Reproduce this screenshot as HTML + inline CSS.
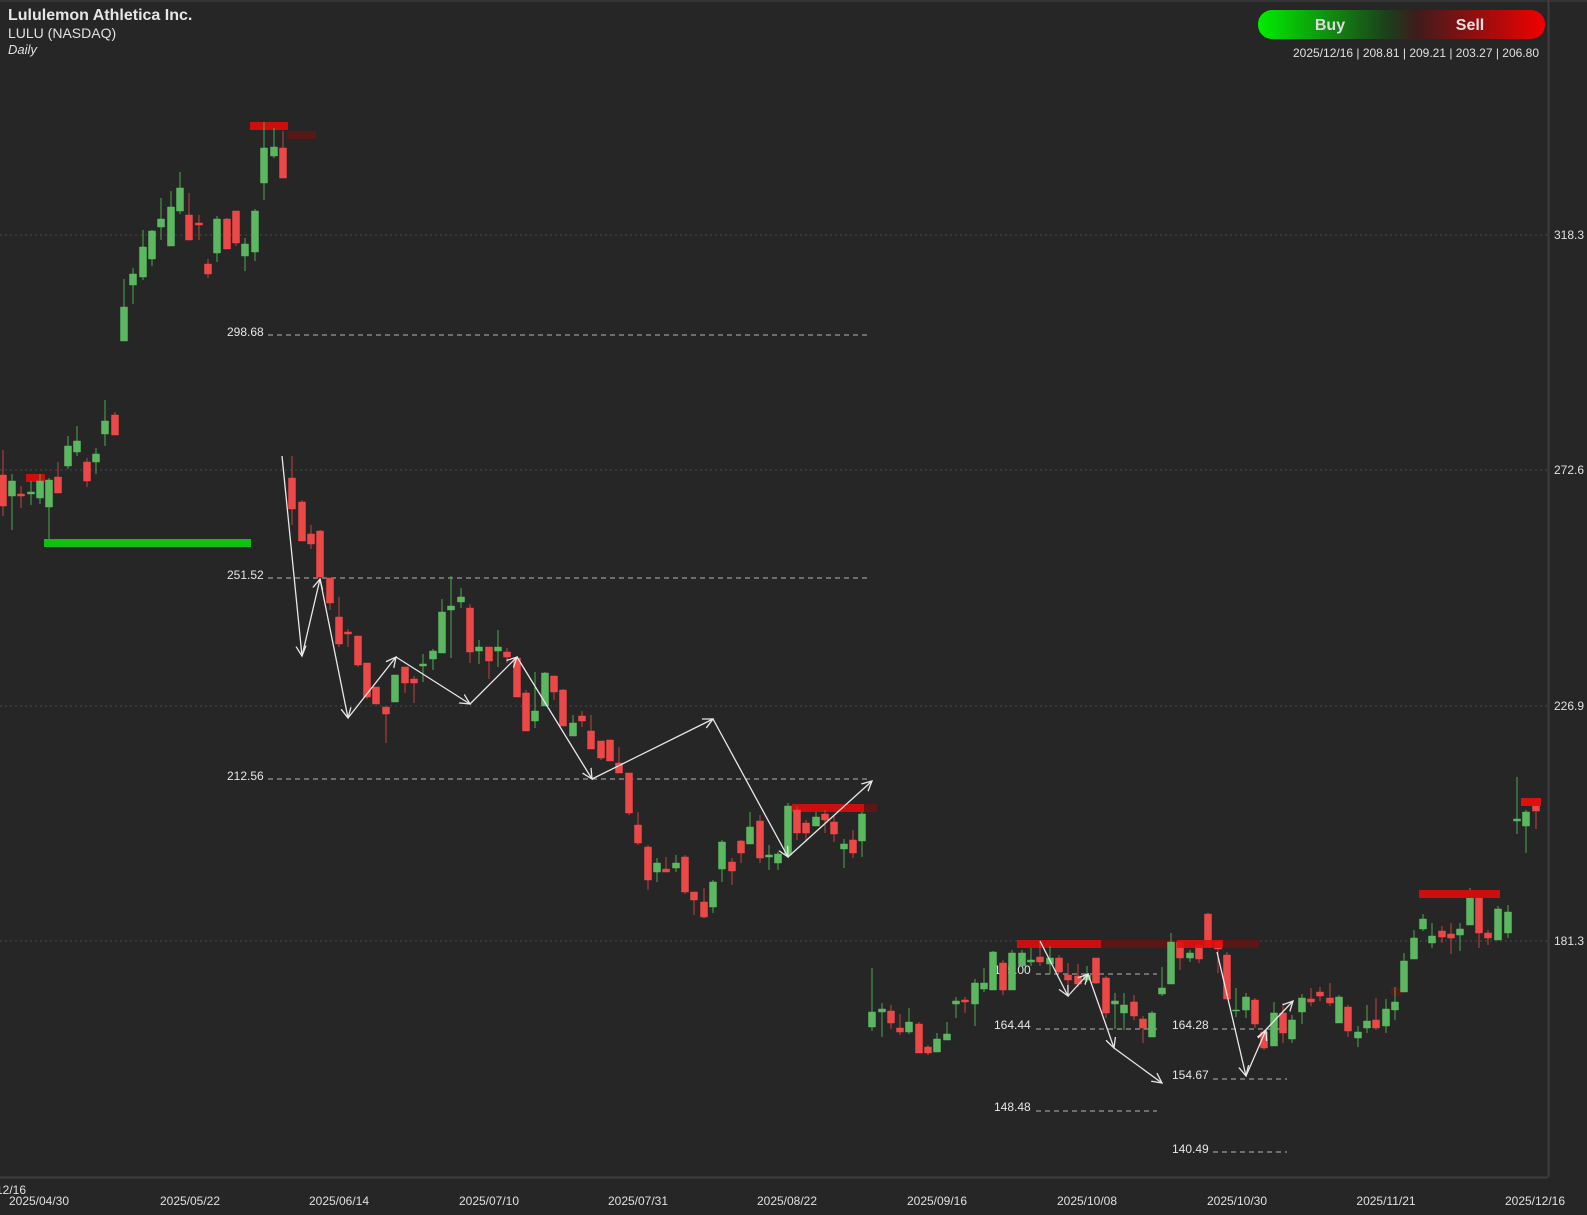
<!DOCTYPE html>
<html><head><meta charset="utf-8"><style>
html,body{margin:0;padding:0;background:#262626;}
body{width:1587px;height:1215px;overflow:hidden;position:relative;font-family:"Liberation Sans",Arial,sans-serif;}
svg{position:absolute;left:0;top:0;}
</style></head><body>
<svg width="1587" height="1215" viewBox="0 0 1587 1215" xmlns="http://www.w3.org/2000/svg" font-family="Liberation Sans, Arial, sans-serif">
<defs>
<linearGradient id="bs" x1="0" x2="1" y1="0" y2="0">
<stop offset="0" stop-color="#00ee00"/><stop offset="0.45" stop-color="#1c3f1c"/><stop offset="0.55" stop-color="#3e1c1c"/><stop offset="1" stop-color="#f20000"/>
</linearGradient>
<marker id="ah" markerWidth="12" markerHeight="12" refX="10" refY="5" orient="auto" markerUnits="userSpaceOnUse" viewBox="0 0 12 10">
<path d="M0,0 L10,5 L0,10" fill="none" stroke="#e8e8e8" stroke-width="1.3"/>
</marker>
</defs>
<rect x="0" y="0" width="1587" height="2" fill="#333"/>
<!-- grid -->
<g stroke="#4a4a4a" stroke-width="1" stroke-dasharray="2 3">
<line x1="0" y1="235" x2="1548" y2="235"/><line x1="0" y1="470" x2="1548" y2="470"/><line x1="0" y1="706" x2="1548" y2="706"/><line x1="0" y1="941" x2="1548" y2="941"/>
</g>
<!-- axes -->
<line x1="1548.5" y1="0" x2="1548.5" y2="1177" stroke="#3e3e3e" stroke-width="2"/>
<line x1="0" y1="1177.5" x2="1548" y2="1177.5" stroke="#3e3e3e" stroke-width="2"/>
<g fill="#e0e0e0" font-size="12">
<text x="1554" y="239">318.3</text><text x="1554" y="474">272.6</text><text x="1554" y="710">226.9</text><text x="1554" y="945">181.3</text>
</g>
<g fill="#e0e0e0" font-size="12" text-anchor="middle">
<text x="39" y="1205">2025/04/30</text><text x="190" y="1205">2025/05/22</text><text x="339" y="1205">2025/06/14</text><text x="489" y="1205">2025/07/10</text><text x="638" y="1205">2025/07/31</text><text x="787" y="1205">2025/08/22</text><text x="937" y="1205">2025/09/16</text><text x="1087" y="1205">2025/10/08</text><text x="1237" y="1205">2025/10/30</text><text x="1386" y="1205">2025/11/21</text><text x="1535" y="1205">2025/12/16</text>
</g>
<text x="-4" y="1194" fill="#e0e0e0" font-size="12">12/16</text>
<!-- levels -->
<g stroke="#9a9a9a" stroke-width="1.3" stroke-dasharray="5 4">
<line x1="268" y1="335" x2="867" y2="335"/><line x1="268" y1="578" x2="867" y2="578"/><line x1="268" y1="779" x2="867" y2="779"/>
<line x1="1036" y1="974" x2="1157" y2="974"/><line x1="1036" y1="1029" x2="1157" y2="1029"/><line x1="1036" y1="1111" x2="1157" y2="1111"/>
<line x1="1213" y1="1029" x2="1287" y2="1029"/><line x1="1213" y1="1079" x2="1287" y2="1079"/><line x1="1213" y1="1152" x2="1287" y2="1152"/>
</g>
<g fill="#e6e6e6" font-size="12">
<text x="227" y="336">298.68</text><text x="227" y="579">251.52</text><text x="227" y="780">212.56</text>
<text x="994" y="974">175.00</text><text x="994" y="1029">164.44</text><text x="994" y="1111">148.48</text>
<text x="1172" y="1029">164.28</text><text x="1172" y="1079">154.67</text><text x="1172" y="1153">140.49</text>
</g>
<!-- bars -->
<rect x="44" y="539" width="207" height="8" fill="#11c011"/>
<rect x="26" y="474" width="19" height="8" fill="#cc0e0e"/>
<rect x="250" y="122" width="38" height="8" fill="#cc0e0e"/>
<rect x="287" y="131" width="29" height="8" fill="#5a1717"/>
<rect x="792" y="804" width="72" height="8" fill="#cc0e0e"/>
<rect x="864" y="804" width="13" height="8" fill="#5a1717"/>
<rect x="1017" y="940" width="84" height="8" fill="#cc0e0e"/>
<rect x="1101" y="940" width="158" height="8" fill="#5a1717"/>
<rect x="1391" y="988" width="10" height="8" fill="#5a1717"/>
<!-- candles -->
<g id="cg"></g>
<g stroke="#4fa553" stroke-width="1">
<path d="M12,474V530M31,481V505M40,474V504M49,478V539M68,436V469M77,426V456M96,448V474M105,400V446M124,279V341M133,268V304M143,230V280M152,230V266M161,198V240M171,191V246M180,172V214M217,216V262M245,238V271M255,209V261M264,122V200M274,128V158M395,675V702M423,654V682M433,649V670M442,599V653M451,576V658M461,588V608M479,640V664M498,630V667M535,672V728M545,672V706M573,715V736M657,858V882M676,855V872M713,880V913M722,840V882M750,812V844M769,845V870M778,852V870M788,803V855M816,812V826M844,839V868M862,812V857M872,968V1031M882,1003V1037M909,1008V1034M937,1033V1052M947,1022V1040M956,997V1018M975,979V1026M984,968V992M993,951V990M1012,950V990M1022,950V966M1031,948V966M1050,946V974M1087,966V982M1115,993V1029M1124,993V1030M1152,1011V1037M1162,967V996M1171,933V984M1190,950V962M1236,988V1017M1246,993V1018M1274,1002V1046M1292,1015V1043M1302,994V1024M1339,995V1023M1358,1026V1047M1367,1005V1033M1386,999V1033M1395,987V1020M1404,953V992M1414,930V959M1423,914V931M1432,923V948M1460,923V951M1470,888V925M1498,906V940M1508,905V938M1517,777V834M1526,810V853"/>
</g>
<g stroke="#c24242" stroke-width="1">
<path d="M3,450V516M21,486V508M58,462V493M87,458V487M115,412V435M189,193V240M199,215V240M208,259V278M227,218V249M236,211V246M283,131V178M292,456V525M302,500V541M311,525V549M320,530V577M330,578V610M339,597V647M348,629V647M358,636V667M367,663V699M376,687V704M386,707V743M405,667V693M414,676V703M470,604V663M489,647V679M507,648V663M517,658V697M526,690V731M554,676V700M563,689V726M582,711V727M591,715V749M601,741V760M610,740V761M619,747V773M629,773V815M638,812V845M648,845V890M666,857V872M685,855V894M694,892V915M704,888V918M732,858V885M741,840V863M760,815V863M797,806V840M806,820V842M825,810V833M834,815V842M853,830V858M891,1005V1029M900,1014V1035M919,1022V1053M928,1045V1055M965,997V1013M1003,960V995M1040,942V966M1059,955V973M1068,963V988M1078,964V987M1096,958V984M1106,976V1018M1134,995V1020M1143,1016V1043M1180,940V970M1199,942V963M1208,913V947M1218,940V973M1227,952V999M1255,998V1028M1264,1030V1050M1283,1003V1043M1311,988V1006M1320,987V1001M1330,983V1006M1348,1005V1037M1376,998V1030M1442,926V943M1451,923V954M1479,893V948M1488,930V945M1536,798V829"/>
</g>
<g fill="#5cb860" stroke="#5cb860" stroke-width="0.5">
<path d="M8.5,481h7v15h-7zM27.5,492h7v2h-7zM36.5,481h7v17h-7zM45.5,480h7v27h-7zM64.5,446h7v20h-7zM73.5,441h7v11h-7zM92.5,454h7v8h-7zM101.5,421h7v13h-7zM120.5,307h7v34h-7zM129.5,274h7v11h-7zM139.5,247h7v30h-7zM148.5,231h7v28h-7zM157.5,219h7v8h-7zM167.5,207h7v39h-7zM176.5,188h7v23h-7zM213.5,219h7v34h-7zM241.5,244h7v12h-7zM251.5,211h7v41h-7zM260.5,148h7v35h-7zM270.5,147h7v9h-7zM391.5,675h7v27h-7zM419.5,664h7v2h-7zM429.5,651h7v8h-7zM438.5,612h7v41h-7zM447.5,606h7v4h-7zM457.5,597h7v5h-7zM475.5,647h7v4h-7zM494.5,647h7v4h-7zM531.5,711h7v10h-7zM541.5,673h7v33h-7zM569.5,723h7v13h-7zM653.5,863h7v9h-7zM672.5,863h7v5h-7zM709.5,882h7v25h-7zM718.5,842h7v27h-7zM746.5,827h7v17h-7zM765.5,855h7v2h-7zM774.5,854h7v9h-7zM784.5,806h7v49h-7zM812.5,817h7v9h-7zM840.5,844h7v5h-7zM858.5,814h7v27h-7zM868.5,1012h7v15h-7zM878.5,1009h7v3h-7zM905.5,1022h7v10h-7zM933.5,1039h7v13h-7zM943.5,1034h7v6h-7zM952.5,1001h7v3h-7zM971.5,983h7v21h-7zM980.5,983h7v6h-7zM989.5,952h7v38h-7zM1008.5,953h7v37h-7zM1018.5,953h7v13h-7zM1027.5,960h7v2h-7zM1046.5,958h7v6h-7zM1083.5,975h7v5h-7zM1111.5,1001h7v3h-7zM1120.5,1005h7v8h-7zM1148.5,1013h7v24h-7zM1158.5,988h7v6h-7zM1167.5,942h7v42h-7zM1186.5,953h7v5h-7zM1232.5,1010h7v1h-7zM1242.5,997h7v13h-7zM1270.5,1013h7v33h-7zM1288.5,1020h7v19h-7zM1298.5,998h7v14h-7zM1335.5,997h7v26h-7zM1354.5,1032h7v6h-7zM1363.5,1021h7v7h-7zM1382.5,1009h7v17h-7zM1391.5,1002h7v8h-7zM1400.5,961h7v31h-7zM1410.5,938h7v21h-7zM1419.5,919h7v10h-7zM1428.5,936h7v7h-7zM1456.5,929h7v6h-7zM1466.5,897h7v28h-7zM1494.5,909h7v31h-7zM1504.5,912h7v21h-7zM1513.5,819h7v2h-7zM1522.5,812h7v14h-7z"/>
</g>
<g fill="#ec4848" stroke="#ec4848" stroke-width="0.5">
<path d="M-0.5,475h7v31h-7zM17.5,494h7v2h-7zM54.5,477h7v16h-7zM83.5,462h7v19h-7zM111.5,415h7v20h-7zM185.5,215h7v25h-7zM195.5,223h7v2h-7zM204.5,264h7v10h-7zM223.5,219h7v30h-7zM232.5,211h7v32h-7zM279.5,148h7v30h-7zM288.5,478h7v31h-7zM298.5,502h7v39h-7zM307.5,534h7v10h-7zM316.5,531h7v46h-7zM326.5,578h7v25h-7zM335.5,617h7v27h-7zM344.5,632h7v2h-7zM354.5,636h7v29h-7zM363.5,663h7v34h-7zM372.5,687h7v17h-7zM382.5,707h7v7h-7zM401.5,667h7v16h-7zM410.5,679h7v4h-7zM466.5,608h7v44h-7zM485.5,647h7v14h-7zM503.5,652h7v5h-7zM513.5,658h7v39h-7zM522.5,693h7v38h-7zM550.5,676h7v16h-7zM559.5,690h7v36h-7zM578.5,716h7v5h-7zM587.5,731h7v18h-7zM597.5,741h7v17h-7zM606.5,740h7v21h-7zM615.5,763h7v10h-7zM625.5,773h7v40h-7zM634.5,825h7v18h-7zM644.5,847h7v33h-7zM662.5,869h7v3h-7zM681.5,857h7v35h-7zM690.5,892h7v8h-7zM700.5,902h7v15h-7zM728.5,862h7v9h-7zM737.5,841h7v12h-7zM756.5,821h7v37h-7zM793.5,810h7v23h-7zM802.5,823h7v10h-7zM821.5,814h7v6h-7zM830.5,822h7v12h-7zM849.5,840h7v13h-7zM887.5,1011h7v12h-7zM896.5,1028h7v4h-7zM915.5,1024h7v29h-7zM924.5,1047h7v6h-7zM961.5,1000h7v2h-7zM999.5,963h7v27h-7zM1036.5,957h7v5h-7zM1055.5,958h7v14h-7zM1064.5,975h7v5h-7zM1074.5,976h7v8h-7zM1092.5,958h7v25h-7zM1102.5,978h7v35h-7zM1130.5,1002h7v14h-7zM1139.5,1019h7v9h-7zM1176.5,942h7v16h-7zM1195.5,945h7v14h-7zM1204.5,914h7v33h-7zM1214.5,942h7v7h-7zM1223.5,955h7v44h-7zM1251.5,1000h7v24h-7zM1260.5,1032h7v16h-7zM1279.5,1013h7v20h-7zM1307.5,999h7v3h-7zM1316.5,992h7v4h-7zM1326.5,998h7v5h-7zM1344.5,1007h7v24h-7zM1372.5,1020h7v8h-7zM1438.5,931h7v6h-7zM1447.5,934h7v4h-7zM1475.5,894h7v39h-7zM1484.5,933h7v5h-7zM1532.5,800h7v11h-7z"/>
</g>
<!-- bars drawn over candles -->
<rect x="1177" y="940" width="46" height="8" fill="#e01010" opacity="0.9"/>
<rect x="1419" y="890" width="81" height="8" fill="#cc0e0e"/>
<rect x="1521" y="798" width="20" height="8" fill="#dd1010"/>
<!-- arrows -->
<g stroke="#e8e8e8" stroke-width="1.3" fill="none" marker-end="url(#ah)">
<line x1="282" y1="456" x2="302" y2="656"/><line x1="302" y1="656" x2="320" y2="579"/><line x1="320" y1="579" x2="348" y2="718"/><line x1="348" y1="718" x2="396" y2="657"/><line x1="396" y1="657" x2="470" y2="704"/><line x1="470" y1="704" x2="517" y2="657"/><line x1="517" y1="657" x2="592" y2="779"/><line x1="592" y1="779" x2="713" y2="719"/><line x1="713" y1="719" x2="788" y2="857"/><line x1="788" y1="857" x2="872" y2="781"/>
<line x1="1040" y1="941" x2="1068" y2="996"/><line x1="1068" y1="996" x2="1088" y2="974"/><line x1="1088" y1="974" x2="1114" y2="1048"/><line x1="1114" y1="1048" x2="1162" y2="1083"/>
<line x1="1217" y1="952" x2="1246" y2="1076"/><line x1="1246" y1="1076" x2="1266" y2="1030"/><line x1="1258" y1="1038" x2="1293" y2="1001"/>
</g>
<!-- header -->
<text x="8" y="20" fill="#e6e6e6" font-size="16" font-weight="bold">Lululemon Athletica Inc.</text>
<text x="8" y="38" fill="#e0e0e0" font-size="14">LULU (NASDAQ)</text>
<text x="8" y="54" fill="#e0e0e0" font-size="13" font-style="italic">Daily</text>
<rect x="1258" y="10" width="287" height="29" rx="14" fill="url(#bs)"/>
<text x="1330" y="30" fill="#dcdcdc" font-size="16" font-weight="bold" text-anchor="middle">Buy</text>
<text x="1470" y="30" fill="#f0dede" font-size="16" font-weight="bold" text-anchor="middle">Sell</text>
<text x="1539" y="57" fill="#e0e0e0" font-size="12" text-anchor="end">2025/12/16 | 208.81 | 209.21 | 203.27 | 206.80</text>
</svg>
</body></html>
